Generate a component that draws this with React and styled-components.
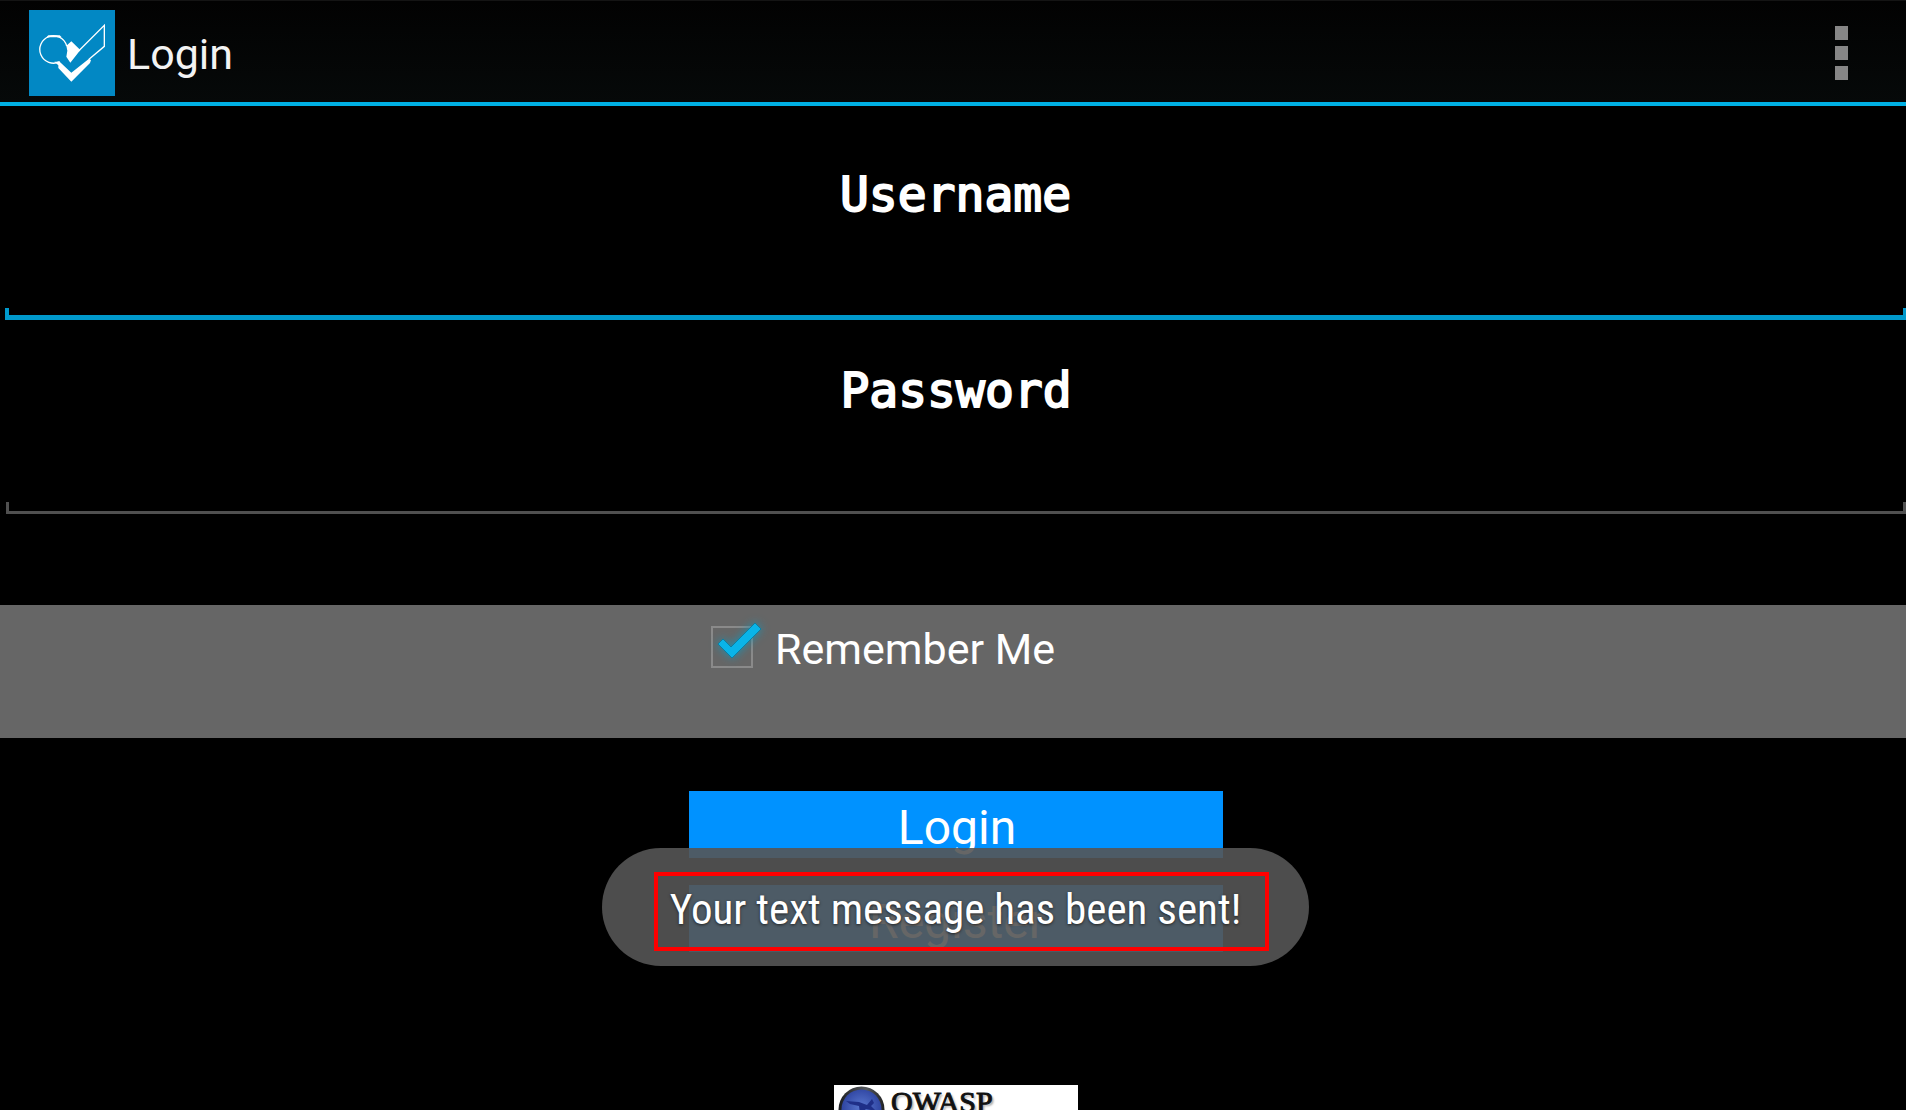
import React from "react";
import styled, { createGlobalStyle } from "styled-components";

const Global = createGlobalStyle`
  * { box-sizing: border-box; }
  body { margin: 0; background: #000; overflow: hidden; }
`;

const Screen = styled.div`
  position: relative;
  height: 100vh;
  overflow: hidden;
  background: #000;
  color: #fff;
  font-family: Roboto, "Liberation Sans", sans-serif;
`;

const ActionBar = styled.header`
  display: flex;
  align-items: center;
  height: 106px;
  padding: 3px 58px 0 29px;
  gap: 12px;
  border-top: 1px solid #141414;
  border-bottom: 4px solid #00b0e4;
  background: linear-gradient(#020202, #060909);
`;

const AppIcon = styled.svg`
  width: 86px;
  height: 86px;
  background: #0288c4;
`;

const Title = styled.h1`
  flex: 1;
  margin: 0;
  padding-top: 2px;
  font-size: 43px;
  line-height: 50px;
  font-weight: 400;
  color: #f3f3f3;
`;

const OverflowButton = styled.button`
  display: flex;
  flex-direction: column;
  gap: 6px;
  padding: 0;
  border: 0;
  background: none;
`;

const Dot = styled.span`
  width: 13px;
  height: 14px;
  background: #868686;
`;

const Form = styled.form`
  display: flex;
  flex-direction: column;
`;

const Field = styled.div`
  display: flex;
  flex-direction: column;
  padding: 60px 0 0 5px;

  & + & { padding: 40px 0 0 6px; }
`;

const FieldLabel = styled.label`
  text-align: center;
  font-family: "DejaVu Sans Mono", "Liberation Mono", monospace;
  font-size: 48px;
  line-height: 56px;
  -webkit-text-stroke: 2px #fff;
`;

const FieldInput = styled.input`
  height: 100px;
  padding: 0 16px 16px;
  border: 0;
  outline: 0;
  color: #fff;
  font: 400 42px Roboto, "Liberation Sans", sans-serif;
  --c: ${(p) => (p.$active ? "#0099cc" : "#505050")};
  --w: ${(p) => (p.$active ? "5px" : "3px")};
  --t: ${(p) => (p.$active ? "4px" : "3px")};
  --b: ${(p) => (p.$active ? "2px" : "4px")};
  background:
    linear-gradient(var(--c), var(--c)) left 0 bottom var(--b) / 100% var(--w) no-repeat,
    linear-gradient(var(--c), var(--c)) left 0 bottom var(--b) / var(--t) 12px no-repeat,
    linear-gradient(var(--c), var(--c)) right 0 bottom var(--b) / 3px 12px no-repeat,
    #000;
`;

const RememberBand = styled.div`
  display: flex;
  justify-content: center;
  height: 133px;
  margin-top: 87px;
  padding: 10px 0 0 6px;
  background: #666;
`;

const RememberLabel = styled.label`
  display: flex;
  align-items: center;
  align-self: flex-start;
  width: 534px;
  padding-left: 22px;
  gap: 22px;
  font-size: 43px;
  line-height: 60px;
`;

const RememberText = styled.span`
  padding-top: 4px;
`;

const CheckBox = styled.span`
  position: relative;
  width: 42px;
  height: 42px;
`;

const CheckInput = styled.input`
  display: block;
  appearance: none;
  width: 42px;
  height: 42px;
  margin: 0;
  border: 2px solid #8a8a8a;
`;

const CheckMark = styled.svg`
  position: absolute;
  left: 0;
  top: -10px;
  width: 60px;
  height: 60px;
  overflow: visible;
  pointer-events: none;
  filter: drop-shadow(0 0 5px #1c90b0);
`;

const Actions = styled.div`
  display: flex;
  flex-direction: column;
  align-items: center;
  gap: 27px;
  padding: 53px 0 0 6px;
`;

const ActionButton = styled.button`
  width: 534px;
  height: 67px;
  padding: 6px 0 0 2px;
  border: 0;
  background: #0092ff;
  color: #fff;
  font: 400 48px/61px Roboto, "Liberation Sans", sans-serif;
`;

const Footer = styled.footer`
  display: flex;
  justify-content: center;
  padding: 133px 0 0 6px;
`;

const Sponsor = styled.div`
  display: flex;
  gap: 6px;
  width: 244px;
  height: 80px;
  padding: 1px 0 0 4px;
  background: #fff;
  color: #111;
`;

const Globe = styled.svg`
  width: 47px;
  height: 47px;
`;

const SponsorName = styled.span`
  font: 400 30px/32px "Liberation Serif", serif;
  -webkit-text-stroke: 1px #111;
  text-shadow: 2px 2px 2px #aaa;
`;

const ToastLayer = styled.div`
  position: absolute;
  left: 0;
  right: 0;
  bottom: 144px;
  display: flex;
  justify-content: center;
  padding-left: 5px;
  pointer-events: none;
`;

const Toast = styled.div`
  display: flex;
  height: 118px;
  padding: 24px 40px 15px 52px;
  border-radius: 59px;
  background: rgba(85, 85, 85, 0.9);
`;

const ToastText = styled.output`
  padding: 0 24px 0 12px;
  border: 4px solid #f00;
  font-family: "Roboto Condensed", "Liberation Sans Narrow", Roboto, sans-serif;
  font-size: 43px;
  line-height: 66px;
  white-space: nowrap;
  text-shadow: 0 1px 3px #222;
`;

export default function App() {
  return (
    <Screen>
      <Global />
      <ActionBar>
        <AppIcon viewBox="0 0 258 258" aria-hidden="true">
          <path d="M92 155 A41 41 0 1 1 113 108" fill="none" stroke="#fff" strokeWidth="4" />
          <path d="M58 76 H92 L98 82 H52 Z" fill="#fff" />
          <path d="M112 107 L127 94 L154 120 L124 158 L112 140 L115 122 Z" fill="#fff" />
          <path d="M148 124 L226 46 V109 L180 148" fill="none" stroke="#fff" strokeWidth="4" />
          <path d="M76 155 H92 L127 188 L180 146 L186 150 L183 159 L127 215 L88 174 V166 Z" fill="#fff" />
        </AppIcon>
        <Title>Login</Title>
        <OverflowButton type="button" aria-label="More options">
          <Dot />
          <Dot />
          <Dot />
        </OverflowButton>
      </ActionBar>
      <Form onSubmit={(e) => e.preventDefault()}>
        <Field>
          <FieldLabel htmlFor="username">Username</FieldLabel>
          <FieldInput id="username" type="text" $active />
        </Field>
        <Field>
          <FieldLabel htmlFor="password">Password</FieldLabel>
          <FieldInput id="password" type="password" />
        </Field>
        <RememberBand>
          <RememberLabel htmlFor="remember">
            <CheckBox>
              <CheckInput id="remember" type="checkbox" defaultChecked />
              <CheckMark viewBox="0 0 60 60" aria-hidden="true">
                <path d="M7 28 L12 23 L20 31 L44 7 L50 13 L21 42 Z" fill="#0ab4e8" stroke="#0b7fa3" strokeWidth="1" />
              </CheckMark>
            </CheckBox>
            <RememberText>Remember Me</RememberText>
          </RememberLabel>
        </RememberBand>
        <Actions>
          <ActionButton type="submit">Login</ActionButton>
          <ActionButton type="button">Register</ActionButton>
        </Actions>
      </Form>
      <Footer>
        <Sponsor>
          <Globe viewBox="0 0 47 47" aria-hidden="true">
            <defs>
              <radialGradient id="globe" cx="50%" cy="45%" r="55%">
                <stop offset="0" stopColor="#5a78d0" />
                <stop offset="1" stopColor="#2a3f9c" />
              </radialGradient>
              <linearGradient id="rim" x1="0" x2="1">
                <stop offset="0" stopColor="#1b1d20" />
                <stop offset="0.6" stopColor="#55595e" />
                <stop offset="1" stopColor="#222" />
              </linearGradient>
            </defs>
            <circle cx="23.5" cy="23.5" r="23" fill="url(#rim)" />
            <circle cx="23.5" cy="23.5" r="20" fill="url(#globe)" />
            <path d="M8 15 L21 16 L29 19 L34 13 L36 17 L33 20 L38 25 L28 23 L22 28 L21 20 L12 18 Z" fill="#1f2f88" />
          </Globe>
          <SponsorName>OWASP</SponsorName>
        </Sponsor>
      </Footer>
      <ToastLayer>
        <Toast>
          <ToastText>Your text message has been sent!</ToastText>
        </Toast>
      </ToastLayer>
    </Screen>
  );
}
